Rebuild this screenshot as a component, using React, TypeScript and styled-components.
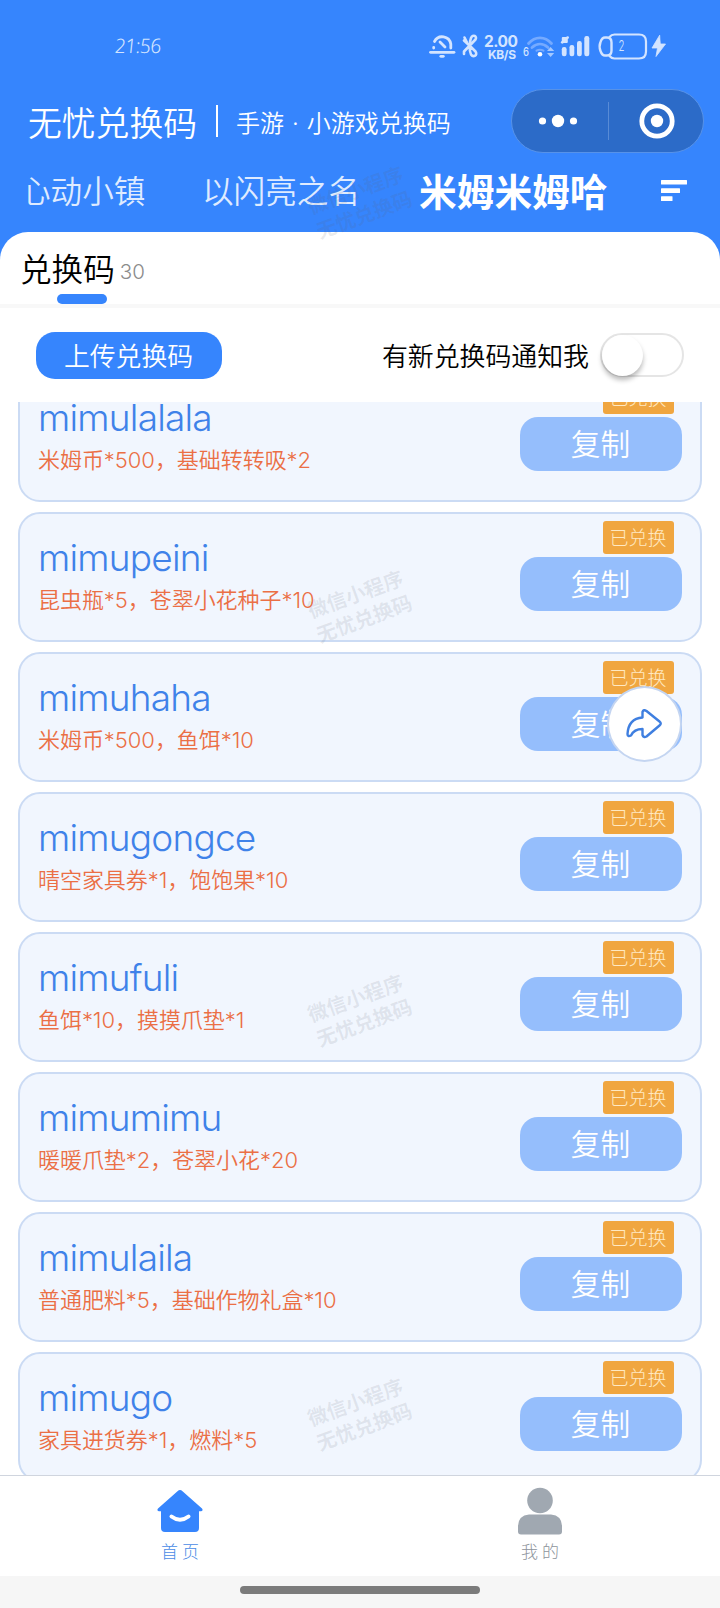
import React from 'react';
import styled, { createGlobalStyle } from 'styled-components';

const BLUE = '#3685fd';

const Global = createGlobalStyle`
  * { box-sizing: border-box; }
  body {
    margin: 0;
    background: #fff;
    font-family: 'Inter', 'Noto Sans CJK SC', sans-serif;
    font-weight: 350;
  }
`;

const Page = styled.div`
  position: relative;
  width: 720px;
  height: 1608px;
  overflow: hidden;
  display: flex;
  flex-direction: column;
  background: #fff;
`;

const Header = styled.header`
  height: 260px;
  flex: none;
  background: ${BLUE};
  color: #fff;
`;

const StatusBar = styled.div`
  height: 89px;
  padding: 29px 50px 0 116px;
  display: flex;
  justify-content: space-between;
`;

const Clock = styled.span`
  font: italic 300 20px/34px 'Noto Sans', sans-serif;
  color: #d3e4ff;
  letter-spacing: -0.6px;
  transform: skewX(6deg);
`;

const TitleBar = styled.div`
  height: 64px;
  padding: 0 16px 0 28px;
  display: flex;
  align-items: center;
`;

const Brand = styled.h1`
  margin: 0;
  width: 188px;
  padding-top: 5px;
  font-size: 33.8px;
  font-weight: 350;
  line-height: 64px;
  white-space: nowrap;
`;

const Slogan = styled.span`
  height: 32px;
  padding: 0 0 0 18px;
  border-left: 2px solid #fff;
  font-size: 24px;
  line-height: 37px;
  word-spacing: 1.2px;
  flex: 1;
  white-space: pre;
`;

const Capsule = styled.div`
  width: 193px;
  height: 64px;
  border: 1.5px solid #5792e8;
  border-radius: 32px;
  background: #2c6bc8;
  display: flex;
  align-items: center;
`;

const CapsuleHalf = styled.div`
  flex: 1;
  height: 38px;
  display: flex;
  align-items: center;
  justify-content: center;
  padding-right: 3px;
  & + & {
    padding: 0 0 0 2px;
    border-left: 1px solid #588bd6;
  }
`;

const GameTabs = styled.nav`
  height: 79px;
  padding: 0 33px 0 28px;
  display: flex;
  align-items: center;
`;

const GameTab = styled.span<{ $width: number; $active?: boolean }>`
  width: ${p => p.$width}px;
  height: 77px;
  display: flex;
  flex: none;
  overflow: hidden;
  white-space: nowrap;
  line-height: 76px;
  font-size: ${p => (p.$active ? 37.7 : 31.6)}px;
  font-weight: ${p => (p.$active ? 700 : 350)};
  color: ${p => (p.$active ? '#fff' : '#dfebff')};
`;

const CutText = styled.span`
  margin-left: -9px;
`;

const MenuIcon = styled.svg`
  display: block;
  margin: -4px 0 0 auto;
`;

const Sheet = styled.section`
  flex: none;
  height: 170px;
  margin-top: -28px;
  border-radius: 28px 28px 0 0;
  background: #fff;
`;

const SheetTabs = styled.div`
  height: 76px;
  border-bottom: 4px solid #f8f8f8;
  padding-left: 20px;
`;

const SheetTab = styled.div`
  height: 62px;
  display: flex;
  color: #000;
  font-size: 31.6px;
  line-height: 76px;
`;

const Count = styled.span`
  margin-left: 5px;
  font-size: 20.5px;
  font-weight: 300;
  line-height: 80px;
  color: #8c8c8c;
`;

const Underline = styled.div`
  width: 50px;
  height: 10px;
  margin-left: 37px;
  border-radius: 5px;
  background: ${BLUE};
`;

const Actions = styled.div`
  height: 94px;
  padding: 0 36px;
  display: flex;
  align-items: center;
`;

const UploadButton = styled.button`
  width: 186px;
  height: 47px;
  padding: 0 1px 1px 0;
  border: 0;
  border-radius: 19px;
  background: ${BLUE};
  color: #fff;
  font: inherit;
  font-size: 25.8px;
`;

const NotifyLabel = styled.span`
  margin-left: auto;
  padding-top: 4px;
  color: #000;
  font-size: 25.9px;
  line-height: 46px;
`;

const Switch = styled.div`
  width: 84px;
  height: 44px;
  margin-left: 11px;
  border: 2px solid #e5e5e5;
  border-radius: 22px;
`;

const Knob = styled.div`
  width: 41px;
  height: 41px;
  border-radius: 50%;
  background: #fff;
  box-shadow: 0 4px 5px rgba(0, 0, 0, 0.27);
`;

const List = styled.main`
  height: 1073px;
  flex: none;
  overflow: hidden;
  padding: 0 18px;
`;

const Cards = styled.div`
  margin-top: -30px;
  display: flex;
  flex-direction: column;
  gap: 10px;
`;

const Card = styled.article`
  height: 130px;
  flex: none;
  border: 2px solid #cbdbf4;
  border-radius: 22px;
  background: #f1f6fe;
  padding: 7px 18px 0;
  display: flex;
  justify-content: space-between;
`;

const CodeInfo = styled.div`
  padding-top: 10.5px;
  white-space: nowrap;
`;

const Code = styled.div`
  font-size: 37px;
  line-height: 52px;
  letter-spacing: -0.8px;
  color: #3f82e9;
`;

const Reward = styled.div`
  font-size: 22px;
  line-height: 32px;
  letter-spacing: -0.05px;
  color: #eb6f45;
`;

const CardSide = styled.div`
  width: 162px;
  display: flex;
  flex-direction: column;
  align-items: flex-end;
  gap: 3px;
`;

const Badge = styled.span`
  width: 71px;
  height: 32.5px;
  margin-right: 8.5px;
  border-radius: 3px;
  background: #f0a640;
  color: #ffe9c2;
  font-size: 19px;
  font-weight: 300;
  line-height: 35px;
  text-align: center;
`;

const CopyButton = styled.button`
  width: 162px;
  height: 54px;
  padding: 0 1px 2px 0;
  border: 0;
  border-radius: 18px;
  background: #95befc;
  color: #fff;
  font: inherit;
  font-size: 29.7px;
`;

const ShareButton = styled.div`
  position: absolute;
  left: 607px;
  top: 686px;
  width: 75px;
  height: 76px;
  border: 2px solid #c4d5f1;
  border-radius: 50%;
  background: #fff;
  display: flex;
  align-items: center;
  justify-content: center;
  padding-right: 1px;
`;

const Watermark = styled.div<{ $top: number }>`
  position: absolute;
  left: 300px;
  top: ${p => p.$top}px;
  width: 120px;
  transform: rotate(-20deg);
  text-align: center;
  font-size: 20px;
  font-weight: 700;
  line-height: 26px;
  color: rgba(95, 100, 110, 0.13);
  pointer-events: none;
`;

const TabBar = styled.footer`
  height: 101px;
  flex: none;
  border-top: 1px solid #d0d5de;
  background: #fff;
  display: flex;
`;

const TabItem = styled.div<{ $color: string }>`
  flex: 1;
  display: flex;
  flex-direction: column;
  align-items: center;
  padding-top: 11px;
  color: ${p => p.$color};
`;

const TabLabel = styled.span`
  font-size: 17px;
  font-weight: 300;
  line-height: 24px;
  letter-spacing: 4px;
  margin: 3px -4px 0 0;
`;

const GestureArea = styled.div`
  height: 32px;
  flex: none;
  background: #f6f6f6;
  display: flex;
  justify-content: center;
  padding-top: 10px;
`;

const GestureBar = styled.div`
  width: 240px;
  height: 8px;
  border-radius: 4px;
  background: #7b7b7b;
`;

const StatusIcons = () => (
  <svg width="246" height="34" viewBox="424 29 246 34" fill="none" stroke="#d3e4ff" strokeLinecap="round" strokeLinejoin="round">
    <g strokeWidth="2.8">
      <path d="M430.500 52.300h23.500" />
      <path d="M433.700 47.500v.5M434.500 41.500a8.700 8.700 0 0 1 16.300 2.500v4M440 42l5 5" />
      <path d="M440.800 56.300h2.500" />
    </g>
    <path d="M464 40.500l7 6.500 4.500 4.500c2.500 3.500-2 6.500-4.500 3-2-4-1.500-13 0-16.500 2-4.500 6.500-1.500 4.500 1.500L464 51.500v2.500M464.500 37.500l2.500 5" strokeWidth="2.600" />
    <g fill="#d3e4ff" stroke="none" fontFamily="Inter, sans-serif">
      <text x="484" y="46.500" fontSize="15.500" fontWeight="650" textLength="34">2.00</text>
      <text x="488" y="58.700" fontSize="12" fontWeight="650" textLength="28">KB/S</text>
      <text x="523" y="56" fontSize="11.500" fontWeight="500" textLength="6" lengthAdjust="spacingAndGlyphs">6</text>
      <circle cx="540" cy="54.300" r="2.300" fill="#fff" />
      <path d="M547 51l3.600-4 3.600 4zM547 53l3.600 4 3.600-4z" opacity=".7" />
      <rect x="561.800" y="37" width="6" height="6" rx="1" />
      <circle cx="562.300" cy="42.300" r="1.400" />
      <circle cx="567.600" cy="37.600" r="1.400" />
      <rect x="561.800" y="47" width="4.800" height="9.200" rx="2.200" />
      <rect x="569.500" y="45" width="4.800" height="11.200" rx="2.200" />
      <rect x="577" y="41" width="4.800" height="15.200" rx="2.200" />
      <rect x="584.300" y="36" width="5" height="20.200" rx="2.200" />
      <path d="M659.500 35.500l-7.500 12.500h5.500l-1.500 8.500 9.500-12.500h-5z" stroke="#d3e4ff" strokeWidth=".8" />
      <text x="618.500" y="51.300" fontSize="14.500" fontWeight="300" textLength="6" lengthAdjust="spacingAndGlyphs">2</text>
    </g>
    <g stroke="#75aaff" strokeWidth="2.800">
      <path d="M528.500 43.500c6.500-7.500 16.500-7.500 23 0M532 47.500c5-4.500 11-4.500 16 0" />
      <path d="M536.500 50.700c2.500-1.500 4.500-1.500 7 0" strokeWidth="2" />
    </g>
    <path d="M609.500 37q2-2.500 5-2.500h24.500q7 0 7 7v10q0 7-7 7h-24.500q-3 0-5-2.500" strokeWidth="2.200" />
    <path d="M605 37.500h2q4.500 0 4.500 5v8q0 5-4.500 5h-2q-3 0-4.500-4.500-1.800-4.500 0-9 1.500-4.500 4.500-4.500z" strokeWidth="2.400" />
  </svg>
);

const HomeIcon = () => (
  <svg width="48" height="50" viewBox="0 0 48 50">
    <path d="M21.500 4.200q2.500-2.200 5 0L46 21.500q1.500 2-.8 2.800H43V41q0 4-4 4H9q-4 0-4-4V24.300H2.800Q.5 23.500 2 21.500z" fill={BLUE} />
    <path d="M15.500 29.500q8.500 6.500 17 0" fill="none" stroke="#fff" strokeWidth="4" strokeLinecap="round" />
  </svg>
);

const PersonIcon = () => (
  <svg width="48" height="50" viewBox="0 0 48 50" fill="#a0a8b1">
    <circle cx="24" cy="13.500" r="12.800" />
    <path d="M13 27.500h22q11 1 11 12v5q0 3-3 3H5q-3 0-3-3v-5q0-11 11-12z" />
  </svg>
);

const codes = [
  ['mimulalala', '米姆币*500，基础转转吸*2'],
  ['mimupeini', '昆虫瓶*5，苍翠小花种子*10'],
  ['mimuhaha', '米姆币*500，鱼饵*10'],
  ['mimugongce', '晴空家具券*1，饱饱果*10'],
  ['mimufuli', '鱼饵*10，摸摸爪垫*1'],
  ['mimumimu', '暖暖爪垫*2，苍翠小花*20'],
  ['mimulaila', '普通肥料*5，基础作物礼盒*10'],
  ['mimugo', '家具进货券*1，燃料*5'],
];

export default function App() {
  return (
    <Page>
      <Global />
      <Header>
        <StatusBar>
          <Clock>21:56</Clock>
          <StatusIcons />
        </StatusBar>
        <TitleBar>
          <Brand>无忧兑换码</Brand>
          <Slogan>手游 · 小游戏兑换码</Slogan>
          <Capsule>
            <CapsuleHalf>
              <svg width="40" height="14" viewBox="0 0 40 14" fill="#fff">
                <circle cx="4.500" cy="7" r="3.600" />
                <circle cx="20" cy="7" r="6.200" />
                <circle cx="35.500" cy="7" r="3.600" />
              </svg>
            </CapsuleHalf>
            <CapsuleHalf>
              <svg width="36" height="36" viewBox="0 0 36 36">
                <circle cx="18" cy="18" r="15.200" fill="none" stroke="#fff" strokeWidth="4.800" />
                <circle cx="18" cy="18" r="6.200" fill="#fff" />
              </svg>
            </CapsuleHalf>
          </Capsule>
        </TitleBar>
        <GameTabs>
          <GameTab $width={174}><CutText>心动小镇</CutText></GameTab>
          <GameTab $width={217}>以闪亮之名</GameTab>
          <GameTab $width={190} $active>米姆米姆哈</GameTab>
          <MenuIcon width="27" height="22" fill="#fff">
            <rect x="1" y="0" width="26" height="4.600" rx=".5" />
            <rect x="1" y="8.300" width="19" height="4.600" rx=".5" />
            <rect x="1" y="16.300" width="11.500" height="4.600" rx=".5" />
          </MenuIcon>
        </GameTabs>
      </Header>
      <Sheet>
        <SheetTabs>
          <SheetTab>兑换码<Count>30</Count></SheetTab>
          <Underline />
        </SheetTabs>
        <Actions>
          <UploadButton>上传兑换码</UploadButton>
          <NotifyLabel>有新兑换码通知我</NotifyLabel>
          <Switch><Knob /></Switch>
        </Actions>
      </Sheet>
      <List>
        <Cards>
          {codes.map(([code, reward]) => (
            <Card key={code}>
              <CodeInfo>
                <Code>{code}</Code>
                <Reward>{reward}</Reward>
              </CodeInfo>
              <CardSide>
                <Badge>已兑换</Badge>
                <CopyButton>复制</CopyButton>
              </CardSide>
            </Card>
          ))}
        </Cards>
      </List>
      <TabBar>
        <TabItem $color="#4a8be6"><HomeIcon /><TabLabel>首页</TabLabel></TabItem>
        <TabItem $color="#8e949c"><PersonIcon /><TabLabel>我的</TabLabel></TabItem>
      </TabBar>
      <GestureArea><GestureBar /></GestureArea>
      <ShareButton>
        <svg width="38" height="32" viewBox="0 0 38 32" fill="none" stroke="#3f7fe0" strokeWidth="2.400" strokeLinejoin="round">
          <path d="M17.500 4q1-3 4-1l13 10.500q2.500 2 0 4L21.500 28.500q-3 1.500-4-1.500v-6q-8.500 0-11.500 6.500-3.500 1.500-3.500-1.500Q3.500 10.500 17.500 9.500z" />
        </svg>
      </ShareButton>
      {[177, 581, 985, 1389].map(top => (
        <Watermark key={top} $top={top}>微信小程序<br />无忧兑换码</Watermark>
      ))}
    </Page>
  );
}
